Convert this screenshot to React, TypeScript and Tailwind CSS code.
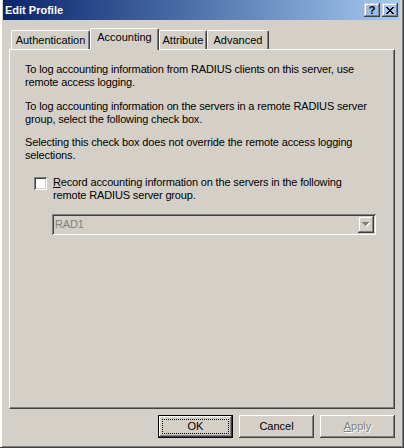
import React from "react";

const raised =
  "shadow-[inset_-1px_-1px_#404040,inset_1px_1px_#ffffff,inset_-2px_-2px_#808080,inset_2px_2px_#d4d0c8]";
const captionRaised =
  "shadow-[inset_-1px_-1px_#404040,inset_1px_1px_#d4d0c8,inset_-2px_-2px_#808080,inset_2px_2px_#ffffff]";
const sunken =
  "shadow-[inset_1px_1px_#808080,inset_-1px_-1px_#ffffff,inset_2px_2px_#404040,inset_-2px_-2px_#d4d0c8]";

const tabs = [
  { label: "Authentication", w: "w-[79px]" },
  { label: "Accounting", w: "w-[69px]", active: true },
  { label: "Attribute", w: "w-[48px]" },
  { label: "Advanced", w: "w-[62px]" },
];

function Tab({ label, w, active }: { label: string; w: string; active?: boolean }) {
  return (
    <div
      className={
        active
          ? `relative z-10 ${w} h-[22px] rounded-t-[2px] border-t border-l border-r border-t-white border-l-white border-r-[#404040] bg-[#d4d0c8] pt-[2px] text-center shadow-[inset_-1px_0_#808080]`
          : `${w} mt-[2px] h-[19px] rounded-t-[2px] border-t border-l border-r border-t-white border-l-white border-r-[#404040] bg-[#d4d0c8] pt-[3px] text-center shadow-[inset_-1px_0_#808080]`
      }
    >
      {label}
    </div>
  );
}

function Button({
  children,
  isDefault,
  disabled,
}: {
  children: React.ReactNode;
  isDefault?: boolean;
  disabled?: boolean;
}) {
  if (isDefault) {
    return (
      <div className="h-[23px] w-[75px] border border-black">
        <div className={`flex h-full w-full items-center justify-center p-[3px] ${raised}`}>
          <div className="flex h-full w-full items-center justify-center border border-dotted border-black">
            {children}
          </div>
        </div>
      </div>
    );
  }
  return (
    <div
      className={`flex h-[23px] w-[75px] items-center justify-center ${raised} ${
        disabled ? "text-[#808080] [text-shadow:1px_1px_0_#ffffff]" : ""
      }`}
    >
      {children}
    </div>
  );
}

export default function App() {
  return (
    <div className="flex h-[448px] w-[404px] flex-col bg-[#d4d0c8] font-['Liberation_Sans',Arial,sans-serif] text-[11px] leading-[13px] text-black shadow-[inset_-1px_-1px_#404040,inset_2px_0_#ffffff,inset_1px_0_#d4d0c8,inset_-2px_-2px_#808080]">
      {/* title bar */}
      <div className="ml-[3px] mr-[4px] flex h-[20px] items-center bg-linear-to-r from-[#0a246a] to-[#a6caf0] pl-[2px] pr-[2px]">
        <span className="font-bold text-white">Edit Profile</span>
        <div className={`ml-auto flex h-[14px] w-[16px] items-center justify-center font-bold ${captionRaised}`}>
          <span className="text-[11px] leading-[11px]">?</span>
        </div>
        <div className={`ml-[2px] flex h-[14px] w-[16px] items-center justify-center ${captionRaised}`}>
          <svg width="8" height="7" viewBox="0 0 8 7" shapeRendering="crispEdges">
            <path d="M0 0h2v1H0zM6 0h2v1H6zM1 1h2v1H1zM5 1h2v1H5zM2 2h4v1H2zM3 3h2v1H3zM2 4h4v1H2zM1 5h2v1H1zM5 5h2v1H5zM0 6h2v1H0zM6 6h2v1H6z" fill="#000" />
          </svg>
        </div>
      </div>

      {/* tabs */}
      <div className="relative z-10 mt-[8px] flex items-start pl-[11px]">
        {tabs.map((t) => (
          <Tab key={t.label} {...t} />
        ))}
      </div>

      {/* panel */}
      <div className="mx-[9px] -mt-[1px] h-[360px] border border-t-white border-l-white border-r-[#404040] border-b-[#404040] pl-[15px] pt-[13px] tracking-[-0.15px] shadow-[inset_-1px_-1px_#808080]">
        <p>
          To log accounting information from RADIUS clients on this server, use
          <br />
          remote access logging.
        </p>
        <p className="mt-[11px]">
          To log accounting information on the servers in a remote RADIUS server
          <br />
          group, select the following check box.
        </p>
        <p className="mt-[10px]">
          Selecting this check box does not override the remote access logging
          <br />
          selections.
        </p>

        <div className="ml-[9px] mt-[14px] flex items-start gap-[6px]">
          <div className={`mt-[1px] h-[13px] w-[13px] shrink-0 bg-white ${sunken}`} />
          <div>
            <span className="underline">R</span>ecord accounting information on the servers in the following
            <br />
            remote RADIUS server group.
          </div>
        </div>

        <div className={`ml-[27px] mt-[12px] flex h-[21px] w-[324px] items-center p-[2px] ${sunken}`}>
          <span className="pl-[1px] text-[#808080]">RAD1</span>
          <div className={`ml-auto flex h-[17px] w-[16px] items-center justify-center ${captionRaised}`}>
            <svg width="8" height="5" viewBox="0 0 8 5" shapeRendering="crispEdges">
              <path d="M1 1h7v1H1zM2 2h5v1H2zM3 3h3v1H3zM4 4h1v1H4z" fill="#ffffff" />
              <path d="M0 0h7v1H0zM1 1h5v1H1zM2 2h3v1H2zM3 3h1v1H3z" fill="#808080" />
            </svg>
          </div>
        </div>
      </div>

      {/* buttons */}
      <div className="mr-[9px] mt-[6px] flex justify-end gap-[6px]">
        <Button isDefault>OK</Button>
        <Button>Cancel</Button>
        <Button disabled>
          <span>
            <span className="underline">A</span>pply
          </span>
        </Button>
      </div>
    </div>
  );
}
